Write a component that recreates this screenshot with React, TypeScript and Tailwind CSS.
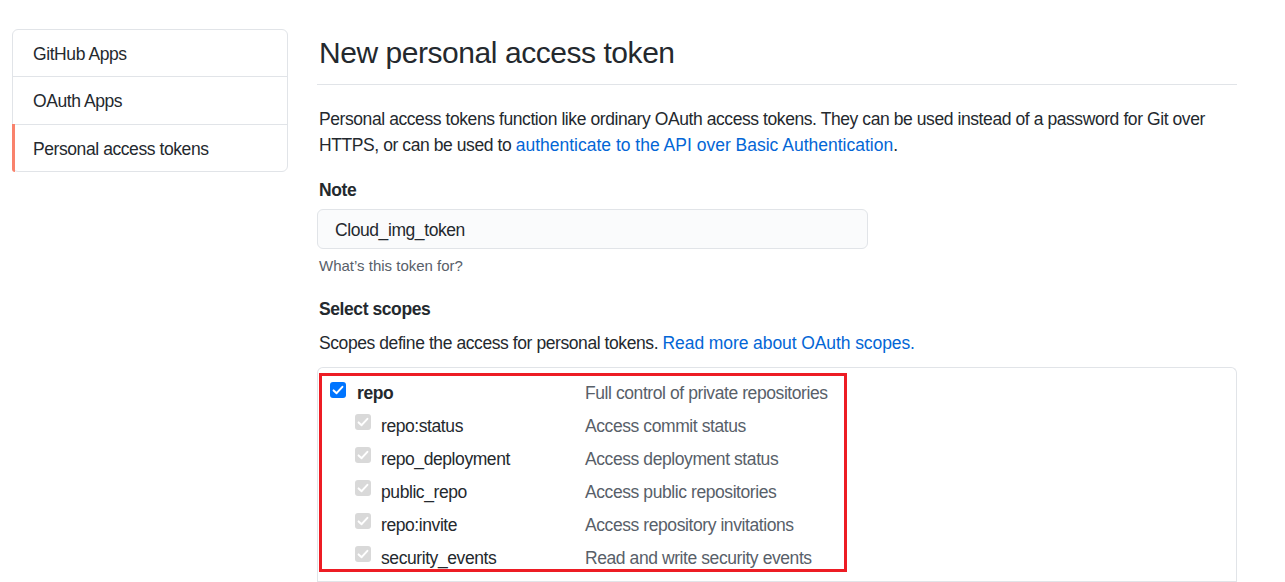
import React from "react";

const font = { fontFamily: '"Segoe UI", "Liberation Sans", Arial, sans-serif' };

const Check = ({ disabled }: { disabled?: boolean }) => (
  <span
    className={
      "flex h-4 w-4 shrink-0 items-center justify-center rounded-[3px] " +
      (disabled ? "bg-[#d9d9d9]" : "bg-[#0075ff]")
    }
  >
    <svg viewBox="0 0 16 16" className="h-4 w-4" fill="none">
      <path
        d="M3.6 8.4 L6.6 11.2 L12.4 4.8"
        stroke="white"
        strokeWidth="2"
        strokeLinecap="round"
        strokeLinejoin="round"
      />
    </svg>
  </span>
);

const subScopes = [
  ["repo:status", "Access commit status"],
  ["repo_deployment", "Access deployment status"],
  ["public_repo", "Access public repositories"],
  ["repo:invite", "Access repository invitations"],
  ["security_events", "Read and write security events"],
];

const menu = ["GitHub Apps", "OAuth Apps", "Personal access tokens"];

export default function App() {
  return (
    <div
      style={font}
      className="h-[582px] w-[1285px] overflow-hidden bg-white text-[17.5px] leading-[26.25px] tracking-[-0.024em] text-[#24292e]"
    >
      <div className="flex pt-[29px]">
        {/* sidebar */}
        <nav className="ml-[12px] w-[276px] shrink-0 self-start rounded-[6px] border border-[#e1e4e8]">
          {menu.map((m, i) => (
            <div
              key={m}
              className={
                "relative px-[20px] pb-[9px] pt-[11px] " +
                (i > 0 ? "border-t border-[#e1e4e8]" : "")
              }
            >
              {i === menu.length - 1 && (
                <span className="absolute -left-px top-[-1px] bottom-[-1px] w-[3px] rounded-bl-[6px] bg-[#f9826c]" />
              )}
              {m}
            </div>
          ))}
        </nav>

        {/* main */}
        <main className="ml-[29px] w-[920px] pt-[5px]">
          <div className="border-b border-[#e1e4e8] pb-[12px]">
            <h2 className="pl-[2px] text-[30px] font-normal leading-[37.5px] tracking-[-0.015em]">
              New personal access token
            </h2>
          </div>

          <p className="mt-[21px] pl-[2px]">
            Personal access tokens function like ordinary OAuth access tokens. They can be used instead of a password for Git over HTTPS, or can be used to{" "}
            <a className="tracking-normal text-[#0366d6]">authenticate to the API over Basic Authentication</a>.
          </p>

          <div className="mt-[19px] pl-[2px] font-bold">Note</div>
          <div className="mt-[6px] flex h-[40px] w-[551px] items-center rounded-[6px] border border-[#e1e4e8] bg-[#fafbfc] pl-[17px] pt-[2px]">
            Cloud_img_token
          </div>
          <div className="mt-[6px] pl-[2px] text-[15px] leading-[22.5px] tracking-normal text-[#586069]">
            What’s this token for?
          </div>

          <div className="mt-[18px] pl-[2px] font-bold">Select scopes</div>
          <p className="mt-[8px] pl-[2px]">
            Scopes define the access for personal tokens.{" "}
            <a className="tracking-[-0.005em] text-[#0366d6]">Read more about OAuth scopes.</a>
          </p>

          <div className="relative mt-[11px] rounded-t-[6px] border border-b-0 border-[#e1e4e8]">
            <div className="border-b border-[#e1e4e8] pb-[9px] pl-[12px] pt-[12px]">
              <div className="flex">
                <div className="flex w-[255px] items-start">
                  <span className="mt-[2px]">
                    <Check />
                  </span>
                  <span className="ml-[11px] font-bold">repo</span>
                </div>
                <span className="text-[#586069]">Full control of private repositories</span>
              </div>
              {subScopes.map(([name, desc]) => (
                <div key={name} className="mt-[6.75px] flex">
                  <div className="flex w-[255px] items-start">
                    <span className="ml-[25px] mt-[1px]">
                      <Check disabled />
                    </span>
                    <span className="ml-[10px]">{name}</span>
                  </div>
                  <span className="text-[#586069]">{desc}</span>
                </div>
              ))}
            </div>
            {/* next scope group, below the fold */}
            <div className="h-[48px]" />

            {/* annotation */}
            <div className="pointer-events-none absolute left-[1px] top-[5px] h-[199px] w-[528px] border-[3px] border-[#ed1c24]" />
          </div>
        </main>
      </div>
    </div>
  );
}
